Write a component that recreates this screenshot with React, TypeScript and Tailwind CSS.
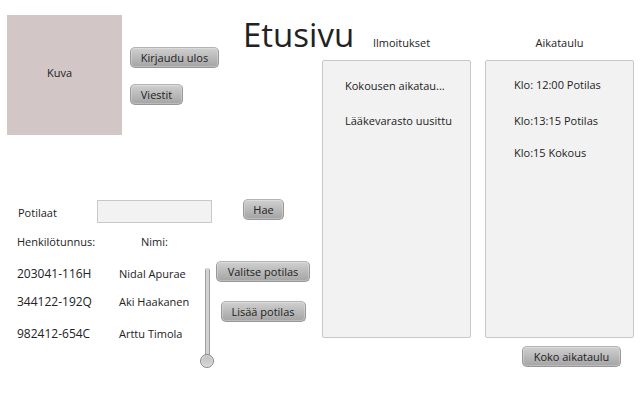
import type { ComponentProps } from "react";

const patients = [
  { id: "203041-116H", name: "Nidal Apurae", row: "h-8" },
  { id: "344122-192Q", name: "Aki Haakanen", row: "h-6" },
  { id: "982412-654C", name: "Arttu Timola", row: "h-10" },
];

function Button({ className = "", ...props }: ComponentProps<"button">) {
  return (
    <button
      type="button"
      className={`flex h-[21px] shrink-0 items-center justify-center whitespace-nowrap rounded-[5px] border border-[#989898] border-t-[#b4b4b4] bg-linear-to-b from-[#d0d0d0] to-[#a4a4a4] leading-4 shadow-[inset_0_0_0_1px_rgba(255,255,255,0.25)] ${className}`}
      {...props}
    />
  );
}

export default function App() {
  return (
    <main className="flex min-h-screen bg-white pr-1.5 font-['Open_Sans','Noto_Sans',sans-serif] text-[11px] leading-4 text-[#222]">
      <div className="w-[322px] shrink-0">
        <header className="flex pl-[7px] pt-[15px]">
          <div className="flex h-[120px] w-[115px] shrink-0 items-center justify-center bg-[#d2c6c6] pb-1 pr-2.5">
            Kuva
          </div>
          <nav className="ml-2 flex flex-col items-start gap-4 pt-8">
            <Button className="w-[89px]">Kirjaudu ulos</Button>
            <Button className="w-[53px]">Viestit</Button>
          </nav>
          <h1 className="ml-6 whitespace-nowrap text-[33px] leading-10">Etusivu</h1>
        </header>

        <form className="mt-16 flex items-start pl-[18px]" onSubmit={(e) => e.preventDefault()}>
          <label htmlFor="search" className="w-[79px] pt-1.5">
            Potilaat
          </label>
          <input
            id="search"
            type="text"
            className="mt-px h-[23px] w-[115px] border border-[#c8c8c8] bg-[#f2f2f2] px-2 outline-none"
          />
          <Button type="submit" className="ml-[31px] w-[41px]">
            Hae
          </Button>
        </form>

        <div className="mt-[11px] flex items-start pl-[17px]">
          <table className="w-[183px] table-fixed border-collapse text-left">
            <thead>
              <tr className="h-4">
                <th className="w-[102px] p-0 font-normal">Henkilötunnus:</th>
                <th className="p-0 pl-[22px] font-normal">Nimi:</th>
              </tr>
            </thead>
            <tbody>
              <tr className="h-2" />
              {patients.map((p) => (
                <tr key={p.id} className={p.row}>
                  <td className="whitespace-nowrap p-0 text-[12px] leading-4">{p.id}</td>
                  <td className="whitespace-nowrap p-0">{p.name}</td>
                </tr>
              ))}
            </tbody>
          </table>
          <input
            type="range"
            aria-label="Vieritä potilaita"
            defaultValue={100}
            className="mt-[34px] h-[100px] w-[14px] appearance-none bg-transparent [writing-mode:vertical-lr] [&::-webkit-slider-runnable-track]:w-[5px] [&::-webkit-slider-runnable-track]:rounded-full [&::-webkit-slider-runnable-track]:bg-[linear-gradient(90deg,#a0a0a0_1px,#d2d2d2_1px,#d2d2d2_4px,#a0a0a0_4px)] [&::-webkit-slider-runnable-track]:bg-[length:100%_calc(100%-6px)] [&::-webkit-slider-runnable-track]:bg-no-repeat [&::-webkit-slider-thumb]:-ml-[5px] [&::-webkit-slider-thumb]:size-[14px] [&::-webkit-slider-thumb]:appearance-none [&::-webkit-slider-thumb]:rounded-full [&::-webkit-slider-thumb]:border [&::-webkit-slider-thumb]:border-[#888] [&::-webkit-slider-thumb]:bg-linear-to-b [&::-webkit-slider-thumb]:from-[#c0c0c0] [&::-webkit-slider-thumb]:to-[#d8d8d8] [&::-webkit-slider-thumb]:shadow-[inset_0_0_0_1px_#ddd]"
          />
          <div className="mt-[27px] flex flex-col items-center gap-[19px] pl-0.5">
            <Button className="w-[94px]">Valitse potilas</Button>
            <Button className="w-[85px]">Lisää potilas</Button>
          </div>
        </div>
      </div>

      <div className="grid flex-1 grid-cols-2 gap-3.5 self-start pt-[35px]">
        <section>
          <h2 className="pl-2.5 text-center">Ilmoitukset</h2>
          <ul className="mt-[9px] h-[278px] rounded-xs border border-[#c8c8c8] bg-[#f2f2f2] pl-[22px] pt-[17px]">
            <li className="whitespace-nowrap">Kokousen aikatau...</li>
            <li className="mt-[19px] whitespace-nowrap">Lääkevarasto uusittu</li>
          </ul>
        </section>
        <section>
          <h2 className="text-center">Aikataulu</h2>
          <ul className="mt-[9px] h-[278px] rounded-xs border border-[#c8c8c8] bg-[#f2f2f2] pl-7 pt-4">
            <li>Klo: 12:00 Potilas</li>
            <li className="mt-5">Klo:13:15 Potilas</li>
            <li className="mt-4">Klo:15 Kokous</li>
          </ul>
          <Button className="ml-[37px] mt-2 w-[99px]">Koko aikataulu</Button>
        </section>
      </div>
    </main>
  );
}
